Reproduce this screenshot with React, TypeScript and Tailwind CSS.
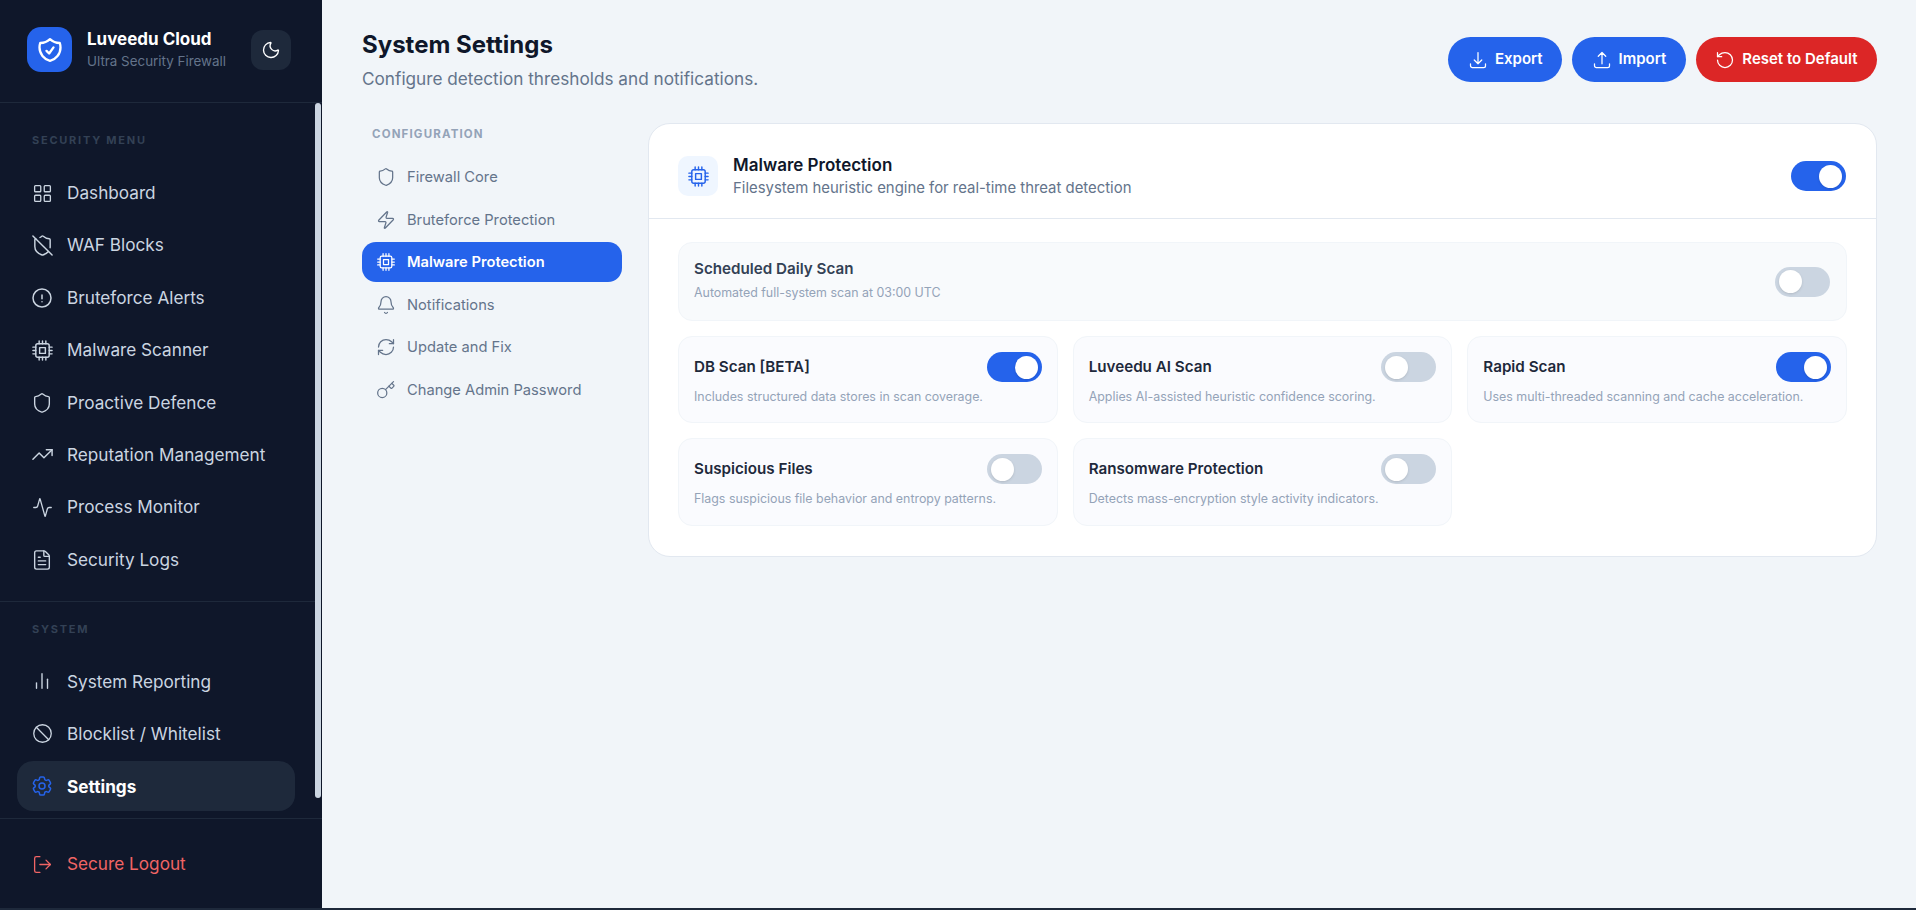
import type { ComponentType } from "react";
import { Activity, Ban, Bell, FileText, Key, LayoutGrid, LogOut, Moon, RefreshCw, RotateCcw, Shield, ShieldOff, TrendingUp, Zap } from "lucide-react";
import {
  HiOutlineArrowDownTray,
  HiOutlineArrowUpTray,
  HiOutlineCog6Tooth,
  HiOutlineExclamationCircle,
  HiOutlineShieldCheck,
} from "react-icons/hi2";

type IconProps = { size?: number; strokeWidth?: number; className?: string };
type Icon = ComponentType<IconProps>;

function BarsIcon({ size = 22, strokeWidth = 1.8, className }: IconProps) {
  return (
    <svg width={size} height={size} viewBox="0 0 24 24" fill="none" stroke="currentColor" strokeWidth={strokeWidth} strokeLinecap="round" className={className}>
      <path d="M18 20V10" />
      <path d="M12 20V4" />
      <path d="M6 20v-6" />
    </svg>
  );
}

function ChipIcon({ size = 23, strokeWidth = 1.5, className }: IconProps) {
  return (
    <svg width={size} height={size} viewBox="0 0 24 24" fill="none" stroke="currentColor" strokeWidth={strokeWidth} strokeLinecap="round" strokeLinejoin="round" className={className}>
      <rect x="5" y="5" width="14" height="14" rx="2" />
      <rect x="9" y="9" width="6" height="6" />
      <path d="M8.5 2v3M12 2v3M15.5 2v3M8.5 19v3M12 19v3M15.5 19v3M2 8.5h3M2 12h3M2 15.5h3M19 8.5h3M19 12h3M19 15.5h3" />
    </svg>
  );
}

const securityMenu: { label: string; icon: Icon; size: number }[] = [
  { label: "Dashboard", icon: LayoutGrid, size: 21 },
  { label: "WAF Blocks", icon: ShieldOff, size: 23 },
  { label: "Bruteforce Alerts", icon: HiOutlineExclamationCircle, size: 24 },
  { label: "Malware Scanner", icon: ChipIcon, size: 23 },
  { label: "Proactive Defence", icon: Shield, size: 22 },
  { label: "Reputation Management", icon: TrendingUp, size: 23 },
  { label: "Process Monitor", icon: Activity, size: 21 },
  { label: "Security Logs", icon: FileText, size: 22 },
];

const systemMenu: { label: string; icon: Icon; size: number; active?: boolean }[] = [
  { label: "System Reporting", icon: BarsIcon, size: 22 },
  { label: "Blocklist / Whitelist", icon: Ban, size: 21 },
  { label: "Settings", icon: HiOutlineCog6Tooth, size: 24, active: true },
];

const configMenu: { label: string; icon: Icon; size: number; active?: boolean }[] = [
  { label: "Firewall Core", icon: Shield, size: 20 },
  { label: "Bruteforce Protection", icon: Zap, size: 20 },
  { label: "Malware Protection", icon: ChipIcon, size: 20, active: true },
  { label: "Notifications", icon: Bell, size: 20 },
  { label: "Update and Fix", icon: RefreshCw, size: 20 },
  { label: "Change Admin Password", icon: Key, size: 20 },
];

const scanOptions = [
  { title: "DB Scan [BETA]", desc: "Includes structured data stores in scan coverage.", on: true },
  { title: "Luveedu AI Scan", desc: "Applies AI-assisted heuristic confidence scoring.", on: false },
  { title: "Rapid Scan", desc: "Uses multi-threaded scanning and cache acceleration.", on: true },
  { title: "Suspicious Files", desc: "Flags suspicious file behavior and entropy patterns.", on: false },
  { title: "Ransomware Protection", desc: "Detects mass-encryption style activity indicators.", on: false },
];

function Toggle({ on }: { on: boolean }) {
  return (
    <div
      className={`flex h-[30px] w-[55px] shrink-0 items-center rounded-full px-[4px] ${
        on ? "justify-end bg-[#2563eb]" : "justify-start bg-[#cbd5e1]"
      }`}
    >
      <span className="h-[23px] w-[23px] rounded-full bg-white shadow-sm" />
    </div>
  );
}

function SideItem({ label, icon: ItemIcon, size, active }: { label: string; icon: Icon; size: number; active?: boolean }) {
  return (
    <div
      className={`flex h-[50px] w-[278px] items-center rounded-[16px] pl-[13px] text-[17.2px] ${
        active ? "bg-[#1e293b] font-bold text-white" : "text-[#cbd5e1]"
      }`}
    >
      <span className={`mr-[13px] flex w-[24px] justify-center ${active ? "text-[#2563eb]" : "text-[#cbd5e1]"}`}>
        <ItemIcon size={size} strokeWidth={1.5} />
      </span>
      {label}
    </div>
  );
}

function ActionButton({ label, icon: ItemIcon, danger }: { label: string; icon: Icon; danger?: boolean }) {
  return (
    <button
      className={`flex h-[45px] items-center gap-[7px] rounded-full px-[19.5px] text-[15px] font-semibold text-white ${
        danger ? "bg-[#dc2626]" : "bg-[#2563eb]"
      }`}
    >
      <ItemIcon size={20} strokeWidth={1.5} />
      {label}
    </button>
  );
}

export default function App() {
  return (
    <div className="h-[910px] overflow-hidden bg-[#1e293b] font-['Inter',sans-serif]">
      <div className="flex h-[908px]">
        {/* Sidebar */}
        <aside className="relative flex w-[322px] shrink-0 flex-col bg-[#0f172a]">
          <div className="flex h-[103px] items-center border-b border-[#1e293b] pb-[3px] pl-[27px]">
            <div className="flex h-[45px] w-[45px] items-center justify-center rounded-[14px] bg-[#2563eb] text-white">
              <HiOutlineShieldCheck size={28} strokeWidth={2} />
            </div>
            <div className="ml-[15px] w-[164px]">
              <div className="text-[17px] leading-[22px] font-bold text-white">Luveedu Cloud</div>
              <div className="text-[13.4px] leading-[22px] text-[#64748b]">Ultra Security Firewall</div>
            </div>
            <div className="flex h-[40px] w-[40px] items-center justify-center rounded-[12px] bg-[#1e293b] text-white">
              <Moon size={20} strokeWidth={1.6} />
            </div>
          </div>

          {/* scrollbar thumb */}
          <div className="absolute top-[103px] left-[315px] h-[695px] w-[6px] rounded-full bg-[#cbd5e1]" />

          <nav className="flex-1 pl-[17px]">
            <div className="pt-[29px] pb-[20px] pl-[15px] text-[11px] leading-[16px] font-bold tracking-[0.16em] text-[#334155]">
              SECURITY MENU
            </div>
            <div className="flex flex-col gap-[2.4px]">
              {securityMenu.map((item) => (
                <SideItem key={item.label} {...item} />
              ))}
            </div>
            <div className="mt-[16.7px] -ml-[17px] w-[315px] border-t border-[#1e293b]" />
            <div className="pt-[19px] pb-[19px] pl-[15px] text-[11px] leading-[16px] font-bold tracking-[0.16em] text-[#334155]">
              SYSTEM
            </div>
            <div className="flex flex-col gap-[2.5px]">
              {systemMenu.map((item) => (
                <SideItem key={item.label} {...item} />
              ))}
            </div>
          </nav>

          <div className="h-[90px] border-t border-[#1e293b] pt-[20px] pl-[17px]">
            <div className="flex h-[50px] items-center pl-[13px] text-[17.2px] text-[#f16565]">
              <span className="mr-[13px] flex w-[24px] justify-center">
                <LogOut size={21} strokeWidth={1.5} />
              </span>
              Secure Logout
            </div>
          </div>
        </aside>

        {/* Main */}
        <main className="flex-1 bg-[#f1f5f9] pr-[39px] pl-[40px]">
          <header className="flex h-[123px] items-start justify-between">
            <div className="pt-[28px]">
              <h1 className="text-[24px] leading-[34px] font-bold text-[#0f172a]">System Settings</h1>
              <p className="mt-[4px] text-[17.2px] leading-[26px] text-[#64748b]">Configure detection thresholds and notifications.</p>
            </div>
            <div className="flex gap-[10px] pt-[37px]">
              <ActionButton label="Export" icon={HiOutlineArrowDownTray} />
              <ActionButton label="Import" icon={HiOutlineArrowUpTray} />
              <ActionButton label="Reset to Default" icon={RotateCcw} danger />
            </div>
          </header>

          <div className="flex gap-[26px]">
            {/* Config menu */}
            <div className="w-[260px] shrink-0">
              <div className="pt-[1px] pb-[13px] pl-[10px] text-[11.5px] leading-[20px] font-bold tracking-[0.1em] text-[#94a3b8]">
                CONFIGURATION
              </div>
              <div className="flex flex-col gap-[2.6px]">
                {configMenu.map((item) => (
                  <div
                    key={item.label}
                    className={`flex h-[40px] items-center gap-[11px] rounded-[14px] pl-[14px] text-[14.7px] ${
                      item.active ? "bg-[#2563eb] font-semibold text-white" : "text-[#64748b]"
                    }`}
                  >
                    <item.icon size={item.size} strokeWidth={1.5} />
                    {item.label}
                  </div>
                ))}
              </div>
            </div>

            {/* Panel */}
            <section className="h-[434px] flex-1 rounded-[22px] border border-[#e2e8f0] bg-white">
              <div className="flex h-[95px] items-center justify-between border-b border-[#e2e8f0] pt-[10px] pr-[30px] pl-[29px]">
                <div className="flex items-center gap-[15px]">
                  <div className="flex h-[40px] w-[40px] items-center justify-center rounded-[10px] bg-[#eff6ff] text-[#2563eb]">
                    <ChipIcon size={23} strokeWidth={1.5} />
                  </div>
                  <div>
                    <div className="text-[17px] leading-[24px] font-semibold text-[#0f172a]">Malware Protection</div>
                    <div className="text-[14.9px] leading-[22px] text-[#64748b]">
                      Filesystem heuristic engine for real-time threat detection
                    </div>
                  </div>
                </div>
                <Toggle on />
              </div>

              <div className="px-[29px] pt-[23px]">
                <div className="flex h-[79px] items-center justify-between rounded-[14px] border border-[#f1f5f9] bg-[#f8fafc] pr-[16px] pl-[15px]">
                  <div className="pb-[2px]">
                    <div className="text-[15.2px] leading-[24px] font-semibold text-[#334155]">Scheduled Daily Scan</div>
                    <div className="text-[12.4px] leading-[24px] text-[#94a3b8]">Automated full-system scan at 03:00 UTC</div>
                  </div>
                  <Toggle on={false} />
                </div>

                <div className="mt-[15px] grid grid-cols-3 grid-rows-[87px_88px] gap-[15px]">
                  {scanOptions.map((opt) => (
                    <div key={opt.title} className="rounded-[14px] border border-[#f1f5f9] bg-[#fafbfe] px-[15px] pt-[15px]">
                      <div className="flex items-center justify-between">
                        <div className="text-[15.2px] font-semibold text-[#1e293b]">{opt.title}</div>
                        <Toggle on={opt.on} />
                      </div>
                      <div className="mt-[5px] text-[12.4px] leading-[20px] text-[#94a3b8]">{opt.desc}</div>
                    </div>
                  ))}
                </div>
              </div>
            </section>
          </div>
        </main>
      </div>
    </div>
  );
}
